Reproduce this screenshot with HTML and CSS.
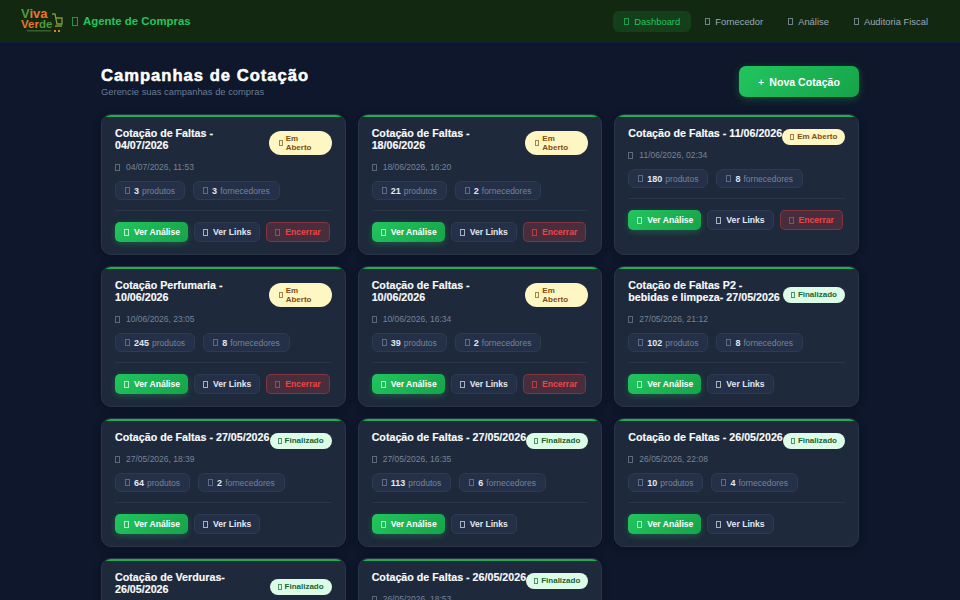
FILE: index.html
```html
<!DOCTYPE html>
<html lang="pt-BR">
<head>
<meta charset="utf-8">
<title>Agente de Compras</title>
<link rel="stylesheet" href="styles.css">
</head>
<body>
<header class="topbar">
  <div class="brand">
    <svg class="logo" viewBox="0 0 42 28" width="42" height="28">
      <text x="0" y="11" class="logo-a"><tspan class="logo-g">V</tspan>iva</text>
      <text x="0" y="21" class="logo-b">Ver<tspan class="logo-g">de</tspan></text>
      <path d="M31 7h3l2 10h5l0-6h-6M34 19h7" class="logo-cart"/>
      <rect x="33" y="23" width="2" height="2" class="logo-dot"/>
      <rect x="37" y="23" width="2" height="2" class="logo-dot"/>
      <rect x="6" y="23" width="24" height="1.5" class="logo-line"/>
    </svg>
    <span class="brand-title"><span class="ico ico-lg"></span>Agente de Compras</span>
  </div>
  <nav class="nav">
    <a class="nav-item active"><span class="ico"></span>Dashboard</a>
    <a class="nav-item"><span class="ico"></span>Fornecedor</a>
    <a class="nav-item"><span class="ico"></span>Análise</a>
    <a class="nav-item"><span class="ico"></span>Auditoria Fiscal</a>
  </nav>
</header>
<main class="page">
  <div class="page-head">
    <div>
      <h1>Campanhas de Cotação</h1>
      <p>Gerencie suas campanhas de compras</p>
    </div>
    <button class="new-btn"><span class="plus">+</span>Nova Cotação</button>
  </div>
  <section class="grid">
    <article class="card">
      <div class="card-head"><h2>Cotação de Faltas -<br>04/07/2026</h2><span class="badge open stack"><span class="ico"></span><span>Em<br>Aberto</span></span></div>
      <div class="date"><span class="ico"></span>04/07/2026, 11:53</div>
      <div class="chips"><span class="chip"><span class="ico"></span><b>3</b><span>produtos</span></span><span class="chip"><span class="ico"></span><b>3</b><span>fornecedores</span></span></div>
      <div class="actions"><a class="btn primary"><span class="ico"></span>Ver Análise</a><a class="btn ghost"><span class="ico"></span>Ver Links</a><a class="btn danger"><span class="ico"></span>Encerrar</a></div>
    </article>
    <article class="card">
      <div class="card-head"><h2>Cotação de Faltas -<br>18/06/2026</h2><span class="badge open stack"><span class="ico"></span><span>Em<br>Aberto</span></span></div>
      <div class="date"><span class="ico"></span>18/06/2026, 16:20</div>
      <div class="chips"><span class="chip"><span class="ico"></span><b>21</b><span>produtos</span></span><span class="chip"><span class="ico"></span><b>2</b><span>fornecedores</span></span></div>
      <div class="actions"><a class="btn primary"><span class="ico"></span>Ver Análise</a><a class="btn ghost"><span class="ico"></span>Ver Links</a><a class="btn danger"><span class="ico"></span>Encerrar</a></div>
    </article>
    <article class="card">
      <div class="card-head"><h2>Cotação de Faltas - 11/06/2026</h2><span class="badge open"><span class="ico"></span><span>Em Aberto</span></span></div>
      <div class="date"><span class="ico"></span>11/06/2026, 02:34</div>
      <div class="chips"><span class="chip"><span class="ico"></span><b>180</b><span>produtos</span></span><span class="chip"><span class="ico"></span><b>8</b><span>fornecedores</span></span></div>
      <div class="actions"><a class="btn primary"><span class="ico"></span>Ver Análise</a><a class="btn ghost"><span class="ico"></span>Ver Links</a><a class="btn danger"><span class="ico"></span>Encerrar</a></div>
    </article>
    <article class="card">
      <div class="card-head"><h2>Cotação Perfumaria -<br>10/06/2026</h2><span class="badge open stack"><span class="ico"></span><span>Em<br>Aberto</span></span></div>
      <div class="date"><span class="ico"></span>10/06/2026, 23:05</div>
      <div class="chips"><span class="chip"><span class="ico"></span><b>245</b><span>produtos</span></span><span class="chip"><span class="ico"></span><b>8</b><span>fornecedores</span></span></div>
      <div class="actions"><a class="btn primary"><span class="ico"></span>Ver Análise</a><a class="btn ghost"><span class="ico"></span>Ver Links</a><a class="btn danger"><span class="ico"></span>Encerrar</a></div>
    </article>
    <article class="card">
      <div class="card-head"><h2>Cotação de Faltas -<br>10/06/2026</h2><span class="badge open stack"><span class="ico"></span><span>Em<br>Aberto</span></span></div>
      <div class="date"><span class="ico"></span>10/06/2026, 16:34</div>
      <div class="chips"><span class="chip"><span class="ico"></span><b>39</b><span>produtos</span></span><span class="chip"><span class="ico"></span><b>2</b><span>fornecedores</span></span></div>
      <div class="actions"><a class="btn primary"><span class="ico"></span>Ver Análise</a><a class="btn ghost"><span class="ico"></span>Ver Links</a><a class="btn danger"><span class="ico"></span>Encerrar</a></div>
    </article>
    <article class="card">
      <div class="card-head"><h2>Cotação de Faltas P2 -<br>bebidas e limpeza- 27/05/2026</h2><span class="badge done"><span class="ico"></span><span>Finalizado</span></span></div>
      <div class="date"><span class="ico"></span>27/05/2026, 21:12</div>
      <div class="chips"><span class="chip"><span class="ico"></span><b>102</b><span>produtos</span></span><span class="chip"><span class="ico"></span><b>8</b><span>fornecedores</span></span></div>
      <div class="actions"><a class="btn primary"><span class="ico"></span>Ver Análise</a><a class="btn ghost"><span class="ico"></span>Ver Links</a></div>
    </article>
    <article class="card">
      <div class="card-head"><h2>Cotação de Faltas - 27/05/2026</h2><span class="badge done"><span class="ico"></span><span>Finalizado</span></span></div>
      <div class="date"><span class="ico"></span>27/05/2026, 18:39</div>
      <div class="chips"><span class="chip"><span class="ico"></span><b>64</b><span>produtos</span></span><span class="chip"><span class="ico"></span><b>2</b><span>fornecedores</span></span></div>
      <div class="actions"><a class="btn primary"><span class="ico"></span>Ver Análise</a><a class="btn ghost"><span class="ico"></span>Ver Links</a></div>
    </article>
    <article class="card">
      <div class="card-head"><h2>Cotação de Faltas - 27/05/2026</h2><span class="badge done"><span class="ico"></span><span>Finalizado</span></span></div>
      <div class="date"><span class="ico"></span>27/05/2026, 16:35</div>
      <div class="chips"><span class="chip"><span class="ico"></span><b>113</b><span>produtos</span></span><span class="chip"><span class="ico"></span><b>6</b><span>fornecedores</span></span></div>
      <div class="actions"><a class="btn primary"><span class="ico"></span>Ver Análise</a><a class="btn ghost"><span class="ico"></span>Ver Links</a></div>
    </article>
    <article class="card">
      <div class="card-head"><h2>Cotação de Faltas - 26/05/2026</h2><span class="badge done"><span class="ico"></span><span>Finalizado</span></span></div>
      <div class="date"><span class="ico"></span>26/05/2026, 22:08</div>
      <div class="chips"><span class="chip"><span class="ico"></span><b>10</b><span>produtos</span></span><span class="chip"><span class="ico"></span><b>4</b><span>fornecedores</span></span></div>
      <div class="actions"><a class="btn primary"><span class="ico"></span>Ver Análise</a><a class="btn ghost"><span class="ico"></span>Ver Links</a></div>
    </article>
    <article class="card">
      <div class="card-head"><h2>Cotação de Verduras-<br>26/05/2026</h2><span class="badge done"><span class="ico"></span><span>Finalizado</span></span></div>
    </article>
    <article class="card">
      <div class="card-head"><h2>Cotação de Faltas - 26/05/2026</h2><span class="badge done"><span class="ico"></span><span>Finalizado</span></span></div>
      <div class="date"><span class="ico"></span>26/05/2026, 18:53</div>
    </article>
  </section>
</main>
</body>
</html>
```
FILE: styles.css
```css
* { box-sizing: border-box; }
html, body { margin: 0; height: 600px; overflow: hidden; }
body {
  background: #0e172b;
  color: #fff;
  font-family: "Liberation Sans", Arial, sans-serif;
}
.topbar {
  height: 43px;
  display: flex;
  align-items: center;
  justify-content: space-between;
  padding: 0 21px;
  background: #132810;
  border-bottom: 1px solid #0f2238;
}
.brand { display: flex; align-items: center; gap: 9px; }
.logo { display: block; }
.logo-a { font: 700 13px "Liberation Sans", sans-serif; fill: #e8772a; }
.logo-b { font: 700 11.5px "Liberation Sans", sans-serif; fill: #e8772a; }
.logo-g { fill: #4c9a3d; }
.logo-cart { fill: none; stroke: #7c9a33; stroke-width: 1.3; }
.logo-dot { fill: #e8772a; }
.logo-line { fill: #35602a; }
.brand-title { display: flex; align-items: center; gap: 5px; font-size: 11.4px; font-weight: 700; color: #22c55e; }
.nav { display: flex; gap: 3px; }
.nav-item {
  display: flex;
  align-items: center;
  gap: 5px;
  height: 21px;
  padding: 0 11px;
  border-radius: 6px;
  font-size: 9.4px;
  color: #9aa8bc;
}
.nav-item.active { background: rgba(34, 197, 94, .15); color: #22c55e; }
.ico {
  display: inline-block;
  flex: none;
  width: 5px;
  height: 7px;
  border: 1px solid currentColor;
  opacity: .7;
}
.ico-lg { width: 6px; height: 9px; }
.page { width: 758px; margin: 0 auto; padding-top: 23px; }
.page-head { display: flex; justify-content: space-between; align-items: flex-start; margin-bottom: 17px; }
h1 { margin: 0; font-size: 16.6px; line-height: 20px; font-weight: 700; letter-spacing: 1px; -webkit-text-stroke: .5px #fff; }
.page-head p { margin: 0; font-size: 9.4px; line-height: 11px; color: #6c7b92; }
.new-btn {
  width: 120px;
  height: 31px;
  border: 0;
  border-radius: 7px;
  background: linear-gradient(135deg, #22c55e, #16a34a);
  box-shadow: 0 2px 8px rgba(34, 197, 94, .3);
  color: #fff;
  font: 700 10.6px "Liberation Sans", sans-serif;
}
.plus { margin-right: 5px; font-weight: 400; }
.grid { display: grid; grid-template-columns: repeat(3, 1fr); gap: 11px 12px; }
.card {
  position: relative;
  overflow: hidden;
  padding: 12px 13px;
  background: #1e293b;
  border: 1px solid #2a3648;
  border-radius: 10px;
  box-shadow: 0 2px 8px rgba(0, 0, 0, .25);
}
.card::before {
  content: "";
  position: absolute;
  left: 0;
  right: 0;
  top: 0;
  height: 2px;
  background: #1eae52;
}
.card-head { display: flex; justify-content: space-between; align-items: center; margin-bottom: 3px; }
h2 { margin: 0 0 8px; font-size: 10.7px; line-height: 12px; font-weight: 700; color: #f8fafc; white-space: nowrap; -webkit-text-stroke: .15px #f8fafc; }
.badge {
  display: inline-flex;
  flex: none;
  align-items: center;
  gap: 3px;
  padding: 3px 8px;
  border-radius: 99px;
  font-size: 8px;
  font-weight: 700;
  line-height: 9.3px;
}
.badge .ico { width: 4px; height: 6px; }
.badge.stack { width: 63px; padding-left: 10px; }
.badge.open { background: #fef6c3; color: #854d0e; }
.badge.done { background: #dcfce7; color: #166534; }
.date { display: flex; gap: 6px; align-items: center; font-size: 8.5px; line-height: 10px; color: #75849a; margin-bottom: 9px; }
.chips { display: flex; gap: 8px; padding-bottom: 10px; margin-bottom: 11px; border-bottom: 1px solid #2a3648; }
.chip {
  display: inline-flex;
  align-items: center;
  gap: 3px;
  height: 19px;
  padding: 0 9px;
  background: #243048;
  border: 1px solid #2e3a50;
  border-radius: 6px;
  font-size: 8.5px;
  color: #75849a;
}
.chip b { font-size: 9px; color: #e2e8f0; }
.chip .ico { margin-right: 1px; }
.actions { display: flex; gap: 6px; }
.btn {
  display: inline-flex;
  align-items: center;
  gap: 5px;
  height: 20px;
  padding: 0 8px;
  border-radius: 5px;
  font-size: 8.6px;
  font-weight: 700;
  white-space: nowrap;
}
.btn.primary { padding-left: 9px; background: linear-gradient(135deg, #22c55e, #16a34a); color: #fff; box-shadow: 0 2px 6px rgba(34, 197, 94, .3); }
.btn.ghost { background: #243048; border: 1px solid #2e3a50; color: #e2e8f0; }
.btn.danger { background: rgba(239, 68, 68, .2); border: 1px solid rgba(239, 68, 68, .35); color: #ef4444; }
```
